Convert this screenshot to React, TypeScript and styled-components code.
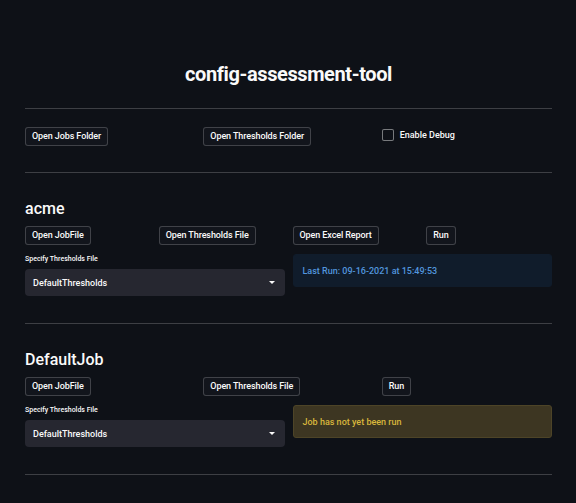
import React from "react";
import styled, { createGlobalStyle } from "styled-components";

const Global = createGlobalStyle`
  html, body { margin: 0; padding: 0; background: #0e1117; }
  body { font-family: Roboto, "Noto Sans", sans-serif; color: #fafafa; }
`;

const Page = styled.div`
  width: 576px;
  min-height: 503px;
  background: #0e1117;
  padding: 60px 24px 0 25px;
  box-sizing: border-box;
  display: flex;
  flex-direction: column;
`;

const Title = styled.h1`
  margin: 0;
  font-size: 20px;
  line-height: 28px;
  font-weight: 700;
  text-align: center;
  letter-spacing: -0.4px;
  color: #fafafa;
`;

const Rule = styled.hr<{ $top: number }>`
  border: none;
  height: 1px;
  background: rgba(250, 250, 250, 0.2);
  margin: ${(p) => p.$top}px 0 0 0;
  width: 100%;
`;

const Columns = styled.div<{ $cols: number; $top: number }>`
  display: grid;
  grid-template-columns: repeat(${(p) => p.$cols}, 1fr);
  column-gap: 8px;
  margin-top: ${(p) => p.$top}px;
  align-items: start;
`;

const Button = styled.button`
  justify-self: start;
  height: 19px;
  padding: 0 6px;
  background: #12151c;
  border: 1px solid rgba(250, 250, 250, 0.2);
  border-radius: 3px;
  color: #fafafa;
  font-family: Roboto, sans-serif;
  font-size: 9px;
  font-weight: 500;
  letter-spacing: -0.1px;
  line-height: 17px;
  white-space: nowrap;
  cursor: pointer;
`;

const CheckRow = styled.label`
  display: flex;
  align-items: center;
  gap: 6px;
  margin-top: 2px;
  font-size: 9px;
  font-weight: 500;
  color: #fafafa;
`;

const Box = styled.span`
  width: 10px;
  height: 10px;
  border: 1px solid rgba(250, 250, 250, 0.45);
  border-radius: 2px;
  background: #0e1117;
`;

const JobTitle = styled.h3<{ $top: number }>`
  margin: ${(p) => p.$top}px 0 0 0;
  font-size: 16px;
  line-height: 22px;
  font-weight: 500;
  color: #fafafa;
`;

const Field = styled.div`
  display: flex;
  flex-direction: column;
  padding-top: 10px;
`;

const FieldLabel = styled.div`
  font-size: 7px;
  line-height: 9px;
  font-weight: 500;
  color: #fafafa;
  margin-bottom: 5px;
`;

const Select = styled.div`
  height: 27px;
  background: #262730;
  border-radius: 4px;
  display: flex;
  align-items: center;
  justify-content: space-between;
  padding: 0 10px 0 8px;
  font-size: 9px;
  font-weight: 500;
  color: #fafafa;
`;

const Caret = styled.span`
  width: 0;
  height: 0;
  border-left: 3px solid transparent;
  border-right: 3px solid transparent;
  border-top: 3px solid #fafafa;
`;

const Alert = styled.div<{ $kind: "info" | "warning" }>`
  margin-top: 9px;
  height: 33px;
  box-sizing: border-box;
  border-radius: 3px;
  display: flex;
  align-items: center;
  padding: 0 9px;
  font-size: 9px;
  font-weight: 500;
  background: ${(p) => (p.$kind === "info" ? "#101c2b" : "#3d3622")};
  border: 1px solid ${(p) => (p.$kind === "info" ? "#101c2b" : "#4d4427")};
  color: ${(p) => (p.$kind === "info" ? "#5296de" : "#d8b73c")};
`;

type Job = {
  name: string;
  buttons: string[];
  alert: { kind: "info" | "warning"; text: string };
};

const jobs: Job[] = [
  {
    name: "acme",
    buttons: ["Open JobFile", "Open Thresholds File", "Open Excel Report", "Run"],
    alert: { kind: "info", text: "Last Run: 09-16-2021 at 15:49:53" },
  },
  {
    name: "DefaultJob",
    buttons: ["Open JobFile", "Open Thresholds File", "Run"],
    alert: { kind: "warning", text: "Job has not yet been run" },
  },
];

export default function App() {
  return (
    <Page>
      <Global />
      <Title>config-assessment-tool</Title>
      <Rule $top={20} />
      <Columns $cols={3} $top={18}>
        <Button>Open Jobs Folder</Button>
        <Button>Open Thresholds Folder</Button>
        <CheckRow>
          <Box />
          Enable Debug
        </CheckRow>
      </Columns>
      <Rule $top={26} />
      {jobs.map((job) => (
        <React.Fragment key={job.name}>
          <JobTitle $top={25}>{job.name}</JobTitle>
          <Columns $cols={job.buttons.length} $top={6}>
            {job.buttons.map((b) => (
              <Button key={b}>{b}</Button>
            ))}
          </Columns>
          <Columns $cols={2} $top={0}>
            <Field>
              <FieldLabel>Specify Thresholds File</FieldLabel>
              <Select>
                DefaultThresholds
                <Caret />
              </Select>
            </Field>
            <Alert $kind={job.alert.kind}>{job.alert.text}</Alert>
          </Columns>
          <Rule $top={27} />
        </React.Fragment>
      ))}
    </Page>
  );
}
